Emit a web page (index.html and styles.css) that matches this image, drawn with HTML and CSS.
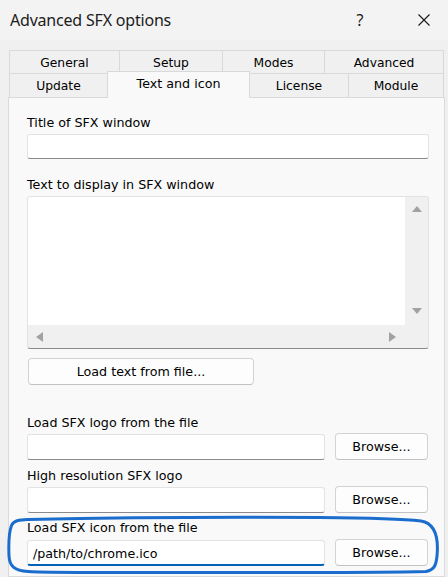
FILE: index.html
```html
<!DOCTYPE html>
<html>
<head>
<meta charset="utf-8">
<link rel="stylesheet" href="styles.css">
</head>
<body>
<div class="window">
  <div class="titlebar">
    <div class="title">Advanced SFX options</div>
    <div class="cap-btn help">?</div>
    <div class="cap-btn close">
      <svg width="12" height="12" viewBox="0 0 12 12"><path d="M0.5 0.5 L11.5 11.5 M11.5 0.5 L0.5 11.5" stroke="#1a1a1a" stroke-width="1.1" fill="none"/></svg>
    </div>
  </div>
  <div class="tabs">
    <div class="tabrow row1">
      <div class="tab">General</div>
      <div class="tab">Setup</div>
      <div class="tab">Modes</div>
      <div class="tab last">Advanced</div>
    </div>
    <div class="tabrow row2">
      <div class="tab">Update</div>
      <div class="tab active">Text and icon</div>
      <div class="tab">License</div>
      <div class="tab last">Module</div>
    </div>
  </div>
  <div class="panel">
    <div class="label l1">Title of SFX window</div>
    <div class="input in1"></div>
    <div class="label l2">Text to display in SFX window</div>
    <div class="textarea">
      <div class="ta-content"></div>
      <div class="vscroll">
        <span class="arr up"></span>
        <span class="arr down"></span>
      </div>
      <div class="hscroll">
        <span class="arr left"></span>
        <span class="arr right"></span>
      </div>
      <div class="corner"></div>
    </div>
    <div class="button loadtext">Load text from file...</div>

    <div class="label l3">Load SFX logo from the file</div>
    <div class="row r1">
      <div class="input wide"></div>
      <div class="button browse">Browse...</div>
    </div>
    <div class="label l4">High resolution SFX logo</div>
    <div class="row r2">
      <div class="input wide"></div>
      <div class="button browse">Browse...</div>
    </div>
    <div class="label l5">Load SFX icon from the file</div>
    <div class="row r3">
      <div class="input wide focused">/path/to/chrome.ico</div>
      <div class="button browse">Browse...</div>
    </div>
  </div>
  <svg class="annotation" width="448" height="577" viewBox="0 0 448 577">
    <path d="M28 519.5 C120 517.5 250 517 320 517.5 C360 517.8 400 518.5 421 521 C436 523.5 438.5 540 437 556 C436 566 434 570 426 571.5 C380 573 250 572.5 120 572.5 C70 572.5 40 572.5 28 571.5 C14 570.5 9.5 566 9 556 C8.5 544 9 532 11.5 525.5 C13.5 520.5 19 519.7 28 519.5 Z" fill="none" stroke="#1a6dcc" stroke-width="3" stroke-linejoin="round"/>
  </svg>
</div>
</body>
</html>
```

FILE: styles.css
```css
html, body {
  margin: 0;
  padding: 0;
}
body {
  width: 448px;
  height: 577px;
  overflow: hidden;
  background: #f0f0f0;
  font-family: "DejaVu Sans", "Liberation Sans", sans-serif;
  color: #000;
}
.window {
  position: relative;
  width: 448px;
  height: 577px;
  display: flex;
  flex-direction: column;
}
.titlebar {
  height: 40px;
  display: flex;
  align-items: center;
  padding-left: 10px;
  background: #f3f3f3;
  flex: none;
}
.title {
  flex: 1;
  font-family: "Noto Sans", "Open Sans", sans-serif;
  font-size: 16px;
  color: #1b1b1b;
  letter-spacing: -0.2px;
}
.cap-btn {
  display: flex;
  align-items: center;
  justify-content: center;
  height: 40px;
}
.help {
  width: 80px;
  font-family: "Noto Sans", sans-serif;
  font-size: 16px;
  color: #1b1b1b;
}
.close {
  width: 48px;
}
.tabs {
  margin: 10px 0 0 9px;
  width: 435px;
  flex: none;
  font-size: 12.3px;
}
.tabrow {
  display: grid;
}
.row1 {
  height: 23px;
  grid-template-columns: 110px 103px 102px 120px;
}
.row2 {
  height: 24px;
  grid-template-columns: 98px 142px 99px 96px;
}
.tab {
  box-sizing: border-box;
  border-top: 1px solid #d9d9d9;
  border-left: 1px solid #d9d9d9;
  background: #f0f0f0;
  display: flex;
  align-items: center;
  justify-content: center;
  padding-top: 1px;
}
.tab.last {
  border-right: 1px solid #d9d9d9;
}
.tab.active {
  position: relative;
  z-index: 1;
  margin-top: -2px;
  margin-bottom: -1px;
  background: #f9f9f9;
  border-right: 1px solid #d9d9d9;
  margin-right: -1px;
  padding-top: 0;
  padding-bottom: 4px;
  font-size: 12.7px;
}
.panel {
  margin-left: 8px;
  width: 437px;
  flex: 1;
  box-sizing: border-box;
  border: 1px solid #dadada;
  background: #f9f9f9;
  padding: 17px 0 0 18px;
  font-size: 12.7px;
}
.label {
  height: 16px;
  line-height: 16px;
  white-space: nowrap;
}
.input {
  box-sizing: border-box;
  background: #fff;
  border: 1px solid #e3e3e3;
  border-bottom-color: #8a8a8a;
  border-radius: 3px;
}
.in1 {
  margin-top: 3px;
  width: 402px;
  height: 25px;
}
.l2 { margin-top: 18px; }
.textarea {
  margin-top: 3px;
  width: 402px;
  height: 153px;
  box-sizing: border-box;
  border: 1px solid #e3e3e3;
  border-bottom-color: #8a8a8a;
  border-radius: 3px;
  background: #f0f0f0;
  display: grid;
  grid-template-columns: 1fr 23px;
  grid-template-rows: 1fr 23px;
  overflow: hidden;
}
.ta-content {
  background: #fff;
}
.vscroll {
  display: flex;
  flex-direction: column;
  align-items: center;
  justify-content: space-between;
  padding: 9px 0 11px;
}
.hscroll {
  display: flex;
  align-items: center;
  justify-content: space-between;
  padding: 0 9px 0 8px;
}
.arr {
  width: 0;
  height: 0;
  display: block;
}
.up {
  border-left: 5px solid transparent;
  border-right: 5px solid transparent;
  border-bottom: 6px solid #a2a2a2;
}
.down {
  border-left: 5px solid transparent;
  border-right: 5px solid transparent;
  border-top: 6px solid #a2a2a2;
}
.left {
  border-top: 5px solid transparent;
  border-bottom: 5px solid transparent;
  border-right: 7px solid #a2a2a2;
}
.right {
  border-top: 5px solid transparent;
  border-bottom: 5px solid transparent;
  border-left: 7px solid #a2a2a2;
}
.button {
  box-sizing: border-box;
  height: 27px;
  border: 1px solid #d3d3d3;
  border-bottom-color: #c2c2c2;
  border-radius: 4px;
  background: #fdfdfd;
  display: flex;
  align-items: center;
  justify-content: center;
  white-space: nowrap;
}
.loadtext {
  margin-top: 9px;
  margin-left: 1px;
  width: 226px;
}
.l3 { margin-top: 30px; }
.l4 { margin-top: 8px; }
.l5 { margin-top: 7px; }
.row {
  display: flex;
  align-items: flex-end;
  width: 401px;
  justify-content: space-between;
}
.r1 { margin-top: 2px; }
.r2 { margin-top: 2px; }
.r3 { margin-top: 3px; }
.wide {
  width: 298px;
  height: 26px;
}
.focused {
  height: 26px;
  border-bottom: 2px solid #0063b6;
  padding-left: 5px;
  display: flex;
  align-items: center;
  padding-top: 1px;
}
.browse {
  width: 93px;
}
.annotation {
  position: absolute;
  left: 0;
  top: 0;
  pointer-events: none;
}
```
